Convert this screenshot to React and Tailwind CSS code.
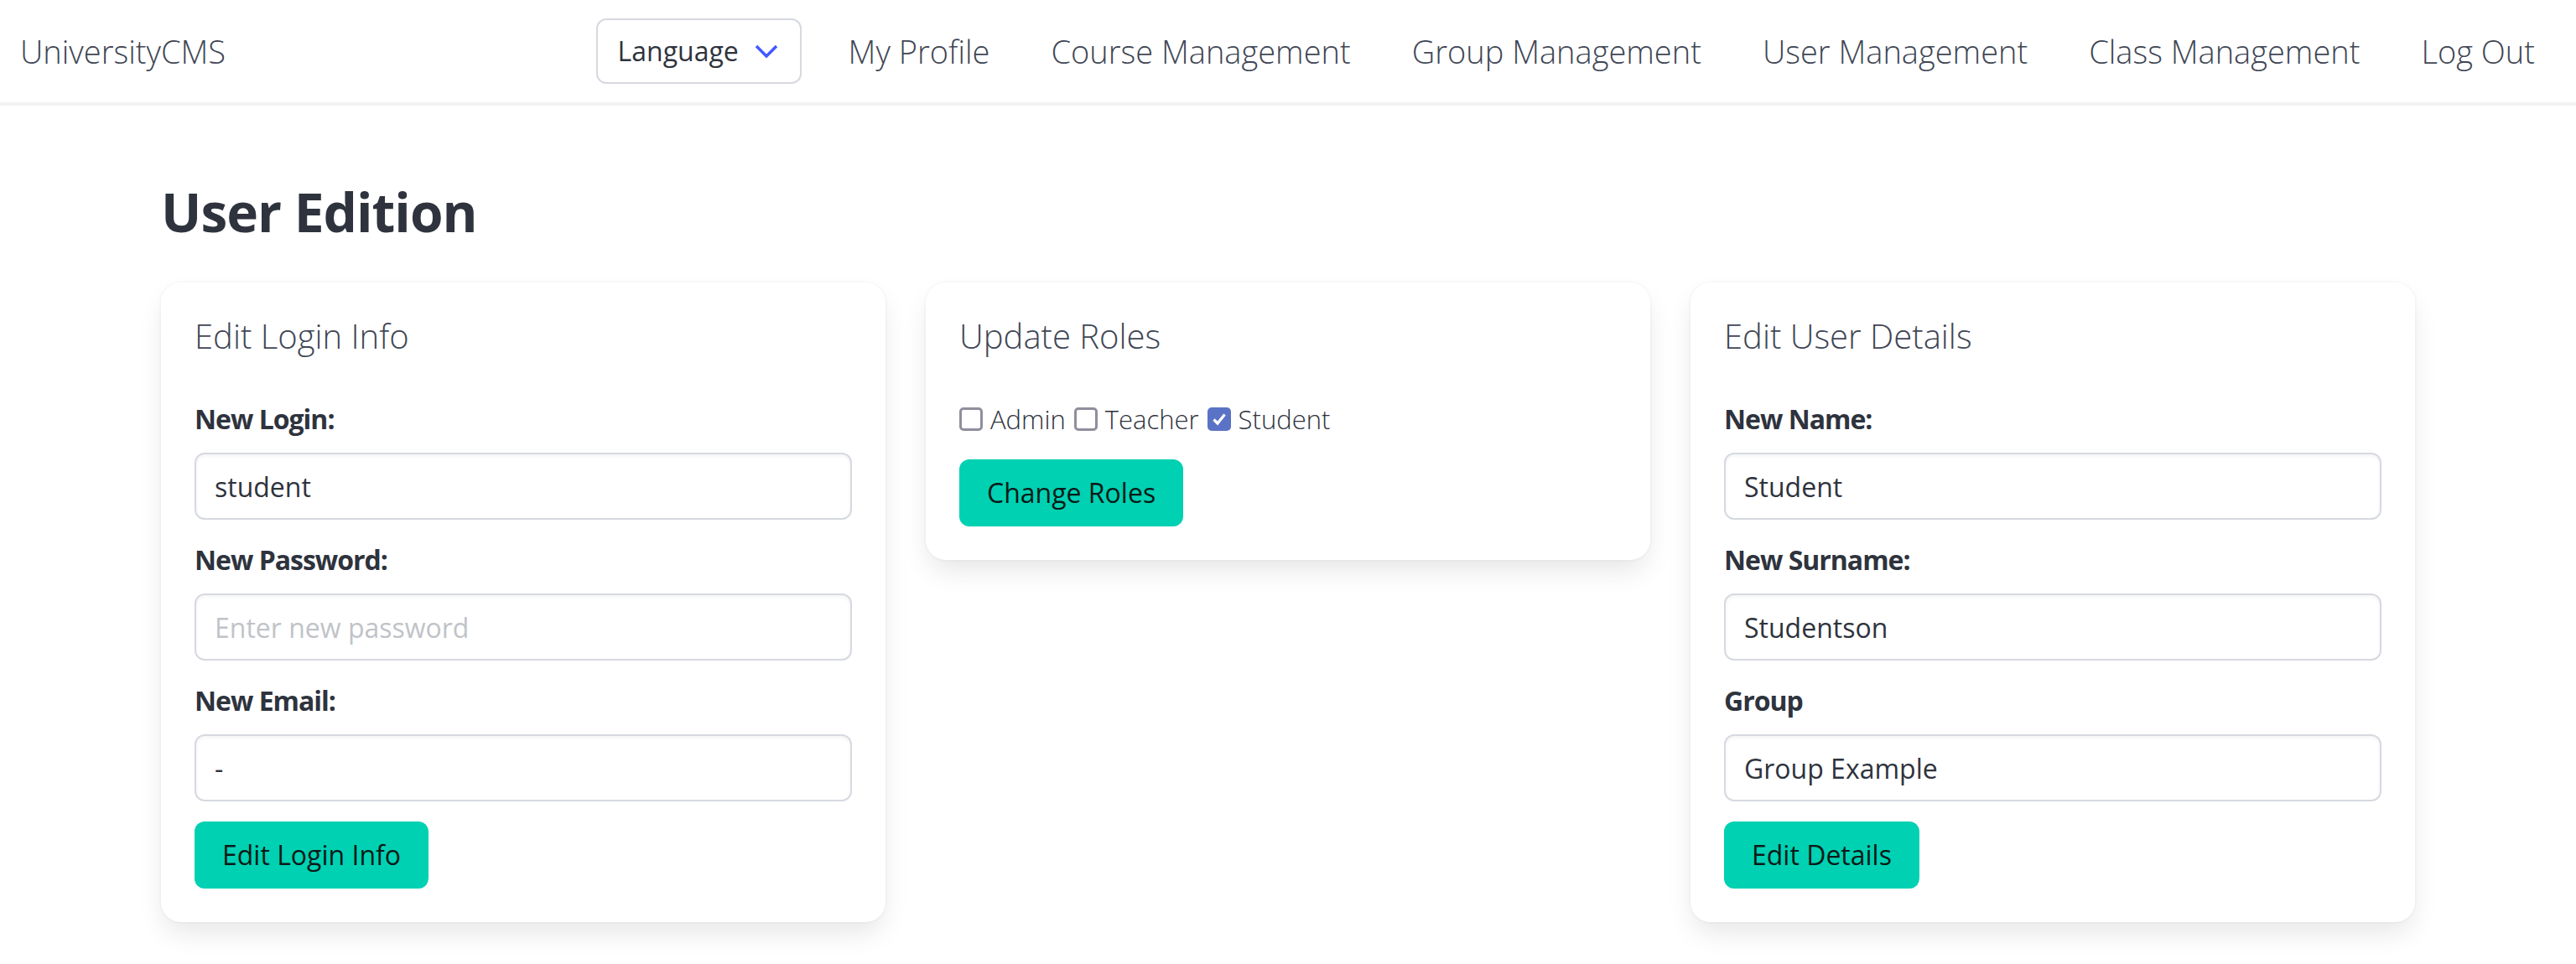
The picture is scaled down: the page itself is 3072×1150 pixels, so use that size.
import React from "react";

const navLinks = [
  "My Profile",
  "Course Management",
  "Group Management",
  "User Management",
  "Class Management",
  "Log Out",
];

const Navbar = () => (
  <nav className="h-[126px] border-b-4 border-[#f2f2f2] bg-white flex items-center justify-between">
    <span className="pl-[24px] text-[38px] font-light text-[#404654]">UniversityCMS</span>
    <div className="flex items-center pr-[49px]">
      <div className="h-[78px] w-[245px] mr-[56px] border-2 border-[#d6d9e0] rounded-[12px] flex items-center pl-[24px] pr-[26px] justify-between">
        <span className="text-[32px] text-[#2e333d]">Language</span>
        <svg width="28" height="17" viewBox="0 0 28 17" fill="none">
          <path d="M2 2L14 14L26 2" stroke="#4258ff" strokeWidth="3.5" />
        </svg>
      </div>
      <div className="flex items-center gap-[73px]">
        {navLinks.map((l) => (
          <a key={l} className="text-[38px] font-light text-[#404654] whitespace-nowrap cursor-pointer">
            {l}
          </a>
        ))}
      </div>
    </div>
  </nav>
);

const Card = ({ title, children }) => (
  <div className="bg-white rounded-[24px] p-[40px] shadow-[0_16px_32px_-4px_rgba(10,10,10,0.1),0_0_0_2px_rgba(10,10,10,0.02)]">
    <h2 className="text-[40px] leading-[47px] font-light text-[#404654] mb-[52px]">{title}</h2>
    {children}
  </div>
);

const Field = ({ label, value, placeholder }) => (
  <div className="mb-[24px]">
    <label className="block text-[32px] leading-[48px] font-bold tracking-[-1px] text-[#2e333d] mb-[16px]">
      {label}
    </label>
    <input
      defaultValue={value}
      placeholder={placeholder}
      className="w-full h-[80px] border-2 border-[#d6d9e0] rounded-[12px] px-[22px] text-[32px] text-[#2e333d] placeholder:text-[#c0c3c8] shadow-[inset_0_2px_4px_rgba(10,10,10,0.05)] outline-none"
    />
  </div>
);

const Button = ({ children }) => (
  <button className="h-[80px] px-[33px] bg-[#00d1b2] rounded-[12px] text-[32px] text-[#0a1a17]">
    {children}
  </button>
);

const Check = ({ label, checked }) => (
  <label className="flex items-center gap-[9px]">
    {checked ? (
      <span className="w-[28px] h-[28px] rounded-[5px] bg-[#5b73c6] flex items-center justify-center">
        <svg width="18" height="16" viewBox="0 0 18 16" fill="none">
          <path d="M2.5 8.5L7 13L15.5 2.5" stroke="white" strokeWidth="3.2" />
        </svg>
      </span>
    ) : (
      <span className="w-[28px] h-[28px] rounded-[5px] border-[3px] border-[#8f8f9d] bg-white" />
    )}
    <span className="text-[31px] leading-[48px] font-light text-[#2e333d]">{label}</span>
  </label>
);

export default function App() {
  return (
    <div className="min-h-screen bg-white font-['Open_Sans',sans-serif]">
      <Navbar />
      <main className="w-[2688px] mx-auto pt-[91px]">
        <h1 className="text-[64px] leading-[72px] font-bold tracking-[-1px] text-[#2e333d] mb-[48px]">
          User Edition
        </h1>
        <div className="grid grid-cols-3 gap-[48px] items-start">
          <Card title="Edit Login Info">
            <Field label="New Login:" value="student" />
            <Field label="New Password:" placeholder="Enter new password" />
            <Field label="New Email:" value="-" />
            <Button>Edit Login Info</Button>
          </Card>
          <Card title="Update Roles">
            <div className="flex items-center gap-[10px] mb-[24px]">
              <Check label="Admin" />
              <Check label="Teacher" />
              <Check label="Student" checked />
            </div>
            <Button>Change Roles</Button>
          </Card>
          <Card title="Edit User Details">
            <Field label="New Name:" value="Student" />
            <Field label="New Surname:" value="Studentson" />
            <Field label="Group" value="Group Example" />
            <Button>Edit Details</Button>
          </Card>
        </div>
      </main>
    </div>
  );
}
